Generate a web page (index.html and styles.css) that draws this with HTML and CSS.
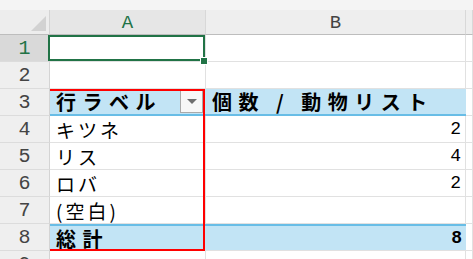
FILE: index.html
```html
<!DOCTYPE html>
<html lang="ja">
<head>
  <meta charset="UTF-8" />
  <title>ピボットテーブル</title>
  <link rel="stylesheet" href="styles.css">
</head>
<body>
  <div class="topbar"></div>

  <div class="sheet">
    <!-- column headers -->
    <div class="corner"><span class="corner-tri"></span></div>
    <div class="colhead sel">A</div>
    <div class="colhead">B</div>
    <div class="colhead"></div>

    <!-- row 1 -->
    <div class="rowhead sel">1</div>
    <div class="cell active"><span class="handle"></span></div>
    <div class="cell"></div>
    <div class="cell"></div>

    <!-- row 2 -->
    <div class="rowhead">2</div>
    <div class="cell"></div>
    <div class="cell"></div>
    <div class="cell"></div>

    <!-- row 3: pivot header -->
    <div class="rowhead">3</div>
    <div class="cell pv-head label">
      <span class="bold-jp">行ラベル</span>
      <span class="dropdown"><span class="tri"></span></span>
      <!-- highlight around the row labels (A3:A8) -->
      <span class="pivot-frame"></span>
    </div>
    <div class="cell pv-head"><span class="bold-jp">個数 / 動物リスト</span></div>
    <div class="cell"></div>

    <!-- rows 4-7 -->
    <div class="rowhead">4</div>
    <div class="cell"><span class="jp">キツネ</span></div>
    <div class="cell num">2</div>
    <div class="cell"></div>

    <div class="rowhead">5</div>
    <div class="cell"><span class="jp">リス</span></div>
    <div class="cell num">4</div>
    <div class="cell"></div>

    <div class="rowhead">6</div>
    <div class="cell"><span class="jp">ロバ</span></div>
    <div class="cell num">2</div>
    <div class="cell"></div>

    <div class="rowhead">7</div>
    <div class="cell"><span class="jp">(空白)</span></div>
    <div class="cell num"></div>
    <div class="cell"></div>

    <!-- row 8: grand total -->
    <div class="rowhead">8</div>
    <div class="cell pv-total"><span class="bold-jp">総計</span></div>
    <div class="cell pv-total num bold">8</div>
    <div class="cell"></div>

    <!-- row 9 -->
    <div class="rowhead">9</div>
    <div class="cell"></div>
    <div class="cell"></div>
    <div class="cell"></div>
  </div>
</body>
</html>
```

FILE: styles.css
```css
body {
  margin: 0;
  background: #ffffff;
  overflow: hidden;
  height: 259px;
}

.topbar {
  height: 10px;
  background: #f4f4f4;
}

.sheet {
  display: grid;
  grid-template-columns: 50px 156px 260px 7px;
  grid-template-rows: 25px repeat(9, 27px);
}

.corner,
.colhead,
.rowhead,
.cell {
  box-sizing: border-box;
  min-width: 0;
}

/* headers */
.corner {
  background: #ededed;
  border-right: 1px solid #d4d4d4;
  border-bottom: 1px solid #bdbdbd;
  display: flex;
  align-items: flex-end;
  justify-content: flex-end;
  padding: 0 3px 3px 0;
}
.corner-tri {
  width: 0;
  height: 0;
  border-left: 15px solid transparent;
  border-bottom: 15px solid #d2d2d2;
}
.colhead {
  background: #eeeeee;
  border-right: 1px solid #d8d8d8;
  border-bottom: 1px solid #bdbdbd;
  display: flex;
  align-items: center;
  justify-content: center;
  font-family: "Liberation Mono", monospace;
  font-size: 19px;
  color: #444444;
  padding-top: 1px;
}
.colhead.sel {
  background: #e6e6e6;
  color: #217346;
}
.rowhead {
  background: #efefef;
  border-right: 1px solid #d4d4d4;
  border-bottom: 1px solid #dcdcdc;
  display: flex;
  align-items: center;
  justify-content: center;
  font-family: "Liberation Mono", monospace;
  font-size: 20px;
  color: #444444;
}
.rowhead.sel {
  background: #d9d9d9;
  color: #217346;
}

/* cells */
.cell {
  background: #ffffff;
  border-right: 1px solid #e1e1e1;
  border-bottom: 1px solid #e1e1e1;
  display: flex;
  align-items: center;
  padding-left: 6px;
  color: #000000;
  white-space: nowrap;
}
.cell.num {
  justify-content: flex-end;
  padding-right: 4px;
  font-family: "Liberation Mono", monospace;
  font-size: 18px;
}
.cell.bold {
  font-weight: bold;
}

.jp {
  font-family: "Noto Sans CJK JP", sans-serif;
  font-size: 19px;
  letter-spacing: 3px;
}
.bold-jp {
  font-family: "Noto Sans CJK JP", sans-serif;
  font-size: 20px;
  font-weight: bold;
  letter-spacing: 6.5px;
}

/* active cell A1 */
.cell.active {
  position: relative;
  z-index: 2;
}
.cell.active::after {
  content: "";
  position: absolute;
  top: 0;
  left: -2px;
  right: 0;
  bottom: 0;
  border: 2px solid #217346;
}
.handle {
  position: absolute;
  right: -3px;
  bottom: -4px;
  width: 6px;
  height: 6px;
  background: #217346;
  border: 1px solid #ffffff;
  z-index: 3;
}

/* pivot table styling */
.pv-head {
  background: #c2e4f5;
  border-right: none;
  border-bottom: 2px solid #68bde6;
}
.pv-head.label {
  position: relative;
  z-index: 4;
  justify-content: space-between;
  padding-right: 3px;
}
.pv-total {
  background: #c2e4f5;
  border-right: none;
  border-top: 2px solid #68bde6;
  border-bottom: 1px solid #e1e1e1;
}
.dropdown {
  box-sizing: border-box;
  width: 23px;
  height: 23px;
  background: #f7f7f7;
  border: 1px solid #a9a9a9;
  display: flex;
  align-items: center;
  justify-content: center;
}
.tri {
  width: 0;
  height: 0;
  border-left: 5px solid transparent;
  border-right: 5px solid transparent;
  border-top: 5px solid #6e6e6e;
}

.pivot-frame {
  position: absolute;
  top: 0;
  left: 0;
  right: 1px;
  height: 162px;
  box-sizing: border-box;
  border-top: 2px solid #ff0000;
  border-right: 2px solid #ff0000;
  border-bottom: 2px solid #ff0000;
  pointer-events: none;
}
```
